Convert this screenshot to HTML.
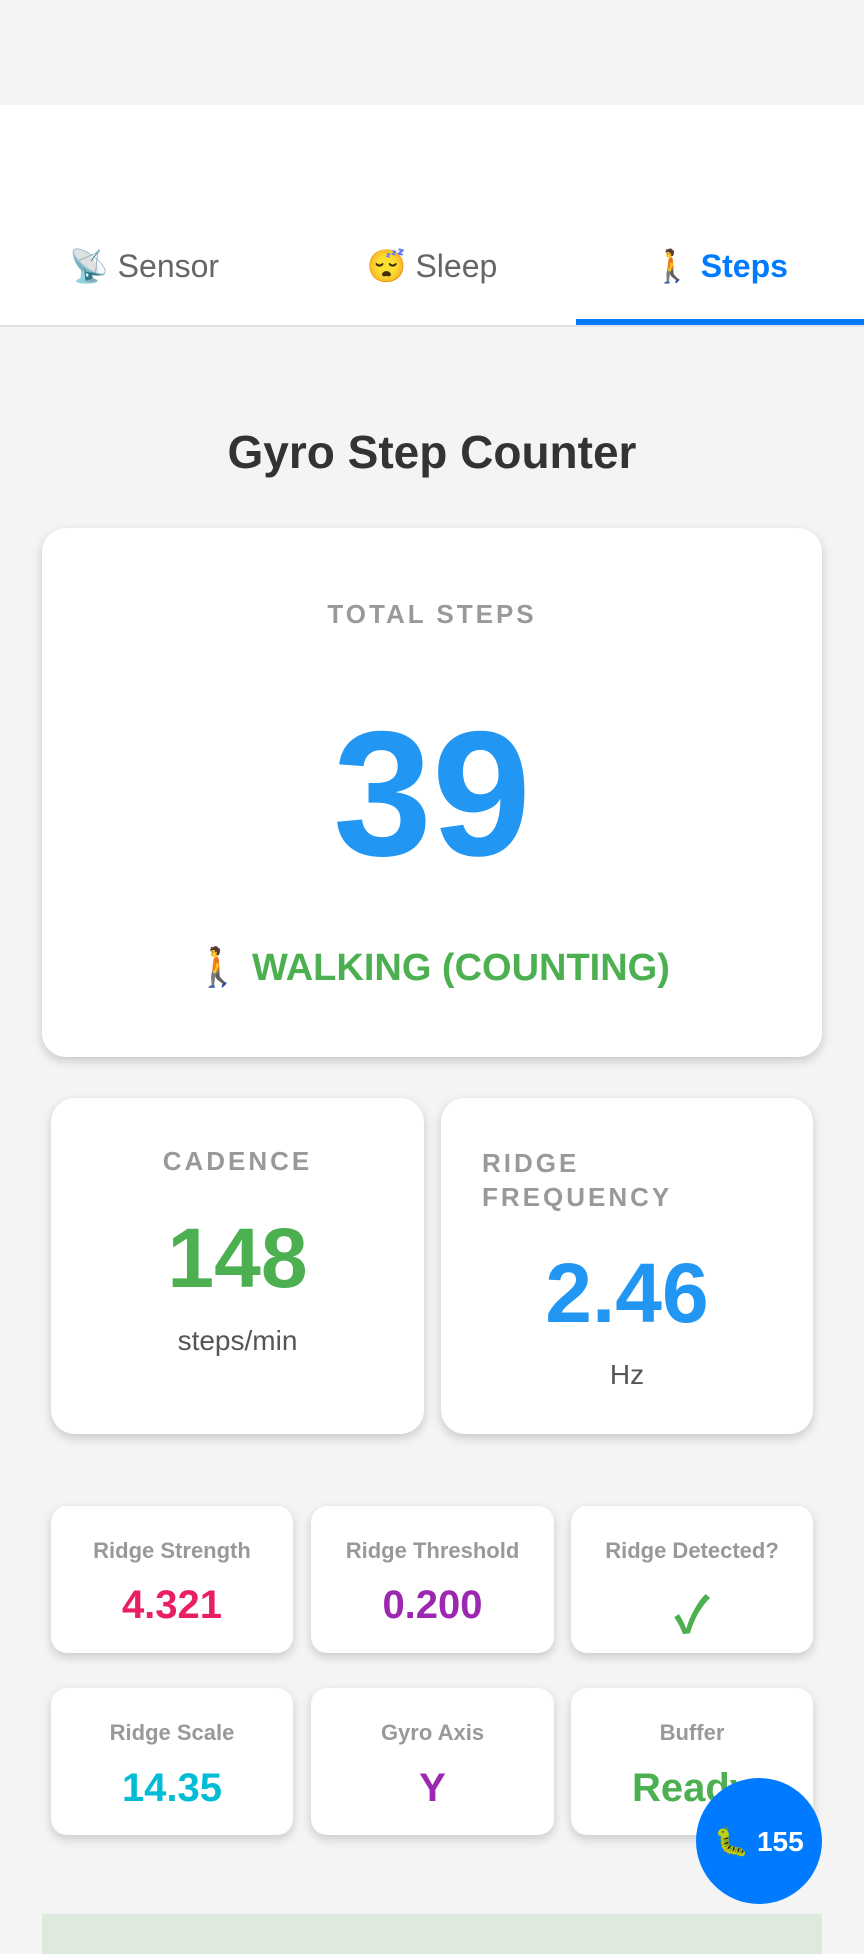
<!DOCTYPE html>
<html><head><meta charset="utf-8"><style>
*{box-sizing:border-box;margin:0;padding:0}
body{width:864px;height:1939px;background:#f4f4f4;font-family:"Liberation Sans","Noto Sans CJK SC",sans-serif;position:relative;overflow:hidden}
.hdr{position:absolute;top:105px;left:0;width:864px;height:222px;background:#fff;border-bottom:2px solid #e2e2e2}
.tab{position:absolute;top:244px;font-size:32px;color:#666;width:288px;text-align:center;line-height:44px}
.ul{position:absolute;left:576px;top:319px;width:288px;height:6px;background:#007bff}
.title{position:absolute;top:425px;width:864px;text-align:center;font-size:46px;font-weight:bold;color:#333}
.card{position:absolute;background:#fff;border-radius:24px;box-shadow:0 4px 10px rgba(0,0,0,.18)}
.c{text-align:center;position:absolute;left:0;width:100%}
.lab{color:#999;font-weight:bold;letter-spacing:3px;font-size:26px}
.sm{border-radius:16px}
.sl{font-size:22px;color:#999;font-weight:bold}
.sv{font-size:40px;font-weight:bold}
</style></head><body>
<div class="hdr"></div>
<div class="tab" style="left:0">📡 Sensor</div>
<div class="tab" style="left:288px">😴 Sleep</div>
<div class="tab" style="left:576px;color:#007bff;font-weight:bold">🚶 Steps</div>
<div class="ul"></div>
<div class="title">Gyro Step Counter</div>

<div class="card" style="left:42px;top:528px;width:780px;height:529px">
 <div class="c lab" style="top:71px">TOTAL STEPS</div>
 <div class="c" style="top:166px;font-size:178px;font-weight:bold;color:#2196f3;line-height:200px">39</div>
 <div class="c" style="top:418px;font-size:38px;font-weight:bold;color:#4caf50">🚶 WALKING (COUNTING)</div>
</div>

<div class="card" style="left:51px;top:1098px;width:373px;height:336px">
 <div class="c lab" style="top:48px">CADENCE</div>
 <div class="c" style="top:112px;font-size:84px;font-weight:bold;color:#4caf50">148</div>
 <div class="c" style="top:227px;font-size:28px;color:#555">steps/min</div>
</div>
<div class="card" style="left:441px;top:1098px;width:372px;height:336px">
 <div class="lab" style="position:absolute;left:41px;top:48px;line-height:34px">RIDGE<br>FREQUENCY</div>
 <div class="c" style="top:147px;font-size:84px;font-weight:bold;color:#2196f3">2.46</div>
 <div class="c" style="top:261px;font-size:28px;color:#555">Hz</div>
</div>

<div class="card sm" style="left:51px;top:1506px;width:242px;height:147px"><div class="c sl" style="top:32px">Ridge Strength</div><div class="c sv" style="top:77px;color:#e91e63">4.321</div></div>
<div class="card sm" style="left:311px;top:1506px;width:243px;height:147px"><div class="c sl" style="top:32px">Ridge Threshold</div><div class="c sv" style="top:77px;color:#9c27b0">0.200</div></div>
<div class="card sm" style="left:571px;top:1506px;width:242px;height:147px"><div class="c sl" style="top:32px">Ridge Detected?</div><div class="c sv" style="top:70px;color:#4caf50;font-size:50px">✓</div></div>
<div class="card sm" style="left:51px;top:1688px;width:242px;height:147px"><div class="c sl" style="top:32px">Ridge Scale</div><div class="c sv" style="top:78px;color:#00bcd4">14.35</div></div>
<div class="card sm" style="left:311px;top:1688px;width:243px;height:147px"><div class="c sl" style="top:32px">Gyro Axis</div><div class="c sv" style="top:78px;color:#9c27b0">Y</div></div>
<div class="card sm" style="left:571px;top:1688px;width:242px;height:147px"><div class="c sl" style="top:32px">Buffer</div><div class="c sv" style="top:78px;color:#4caf50">Ready</div></div>

<div style="position:absolute;left:42px;top:1914px;width:780px;height:40px;background:#dfeadf"></div>
<div style="position:absolute;left:696px;top:1778px;width:126px;height:126px;border-radius:50%;background:#007bff;color:#fff;font-weight:bold;font-size:28px;display:flex;align-items:center;justify-content:center">🐛 155</div>
</body></html>
